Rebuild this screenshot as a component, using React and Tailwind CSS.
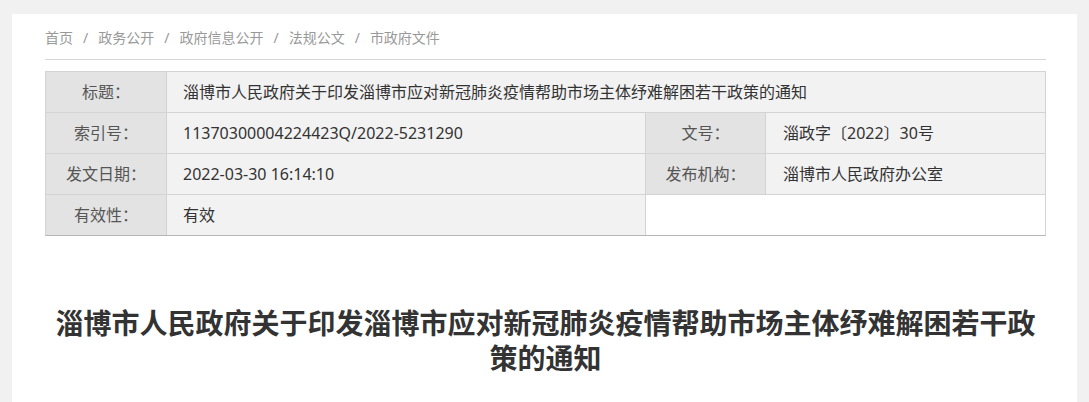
import React from "react";

const crumbs = ["首页", "政务公开", "政府信息公开", "法规公文", "市政府文件"];

const Label = ({ children }) => (
  <div className="bg-[#e3e3e3] text-[#555] flex items-center justify-center h-[40px] text-[16px]">
    {children}
  </div>
);

const Value = ({ children, className = "" }) => (
  <div className={`bg-[#f2f2f2] text-[#333] flex items-center h-[40px] pl-[16px] text-[16px] ${className}`}>
    {children}
  </div>
);

const App = () => {
  return (
    <div
      className="min-h-screen bg-[#f1f1f1] pt-[14px]"
      style={{ fontFamily: '"Noto Sans", "Noto Sans CJK SC", sans-serif' }}
    >
      <div className="bg-white mx-3 pl-[33px] pr-[31px] pt-[14px] pb-[40px]">
        {/* breadcrumb */}
        <div className="flex items-center text-[14px] leading-[20px] text-[#999] pb-[11px] border-b border-[#d6d6d6]">
          {crumbs.map((c, i) => (
            <React.Fragment key={c}>
              {i > 0 && <span className="mx-[10px]">/</span>}
              <span>{c}</span>
            </React.Fragment>
          ))}
        </div>

        {/* info table */}
        <div className="mt-[11px] grid grid-cols-[120px_478px_119px_1fr] gap-px bg-[#d3d3d3] border border-[#d3d3d3] border-b-[#b5b5b5]">
          <Label>标题：</Label>
          <Value className="col-span-3">淄博市人民政府关于印发淄博市应对新冠肺炎疫情帮助市场主体纾难解困若干政策的通知</Value>

          <Label>索引号：</Label>
          <Value>11370300004224423Q/2022-5231290</Value>
          <Label>文号：</Label>
          <Value className="pl-[17px]">淄政字〔2022〕30号</Value>

          <Label>发文日期：</Label>
          <Value>2022-03-30 16:14:10</Value>
          <Label>发布机构：</Label>
          <Value className="pl-[17px]">淄博市人民政府办公室</Value>

          <Label>有效性：</Label>
          <Value>有效</Value>
          <div className="col-span-2 bg-white h-[40px]"></div>
        </div>

        {/* article title */}
        <h1 className="mt-[70px] text-center text-[28px] leading-[35px] font-bold text-[#333]">
          淄博市人民政府关于印发淄博市应对新冠肺炎疫情帮助市场主体纾难解困若干政策的通知
        </h1>
      </div>
    </div>
  );
};

export default App;
